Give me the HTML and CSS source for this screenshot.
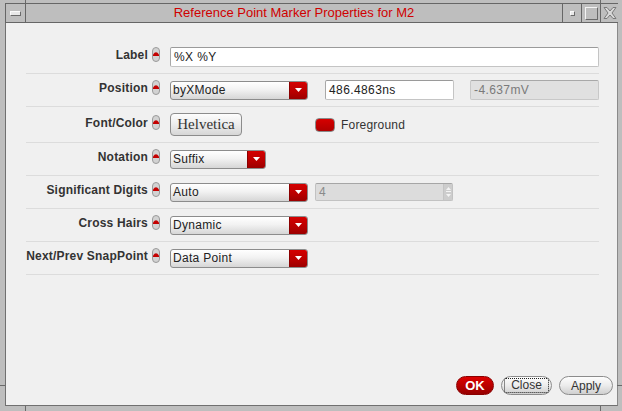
FILE: index.html
```html
<!DOCTYPE html>
<html>
<head>
<meta charset="utf-8">
<link rel="stylesheet" href="styles.css">
</head>
<body>
<div class="window">
  <span class="tick tick-tl"></span>
  <span class="tick tick-tr"></span>
  <span class="tick tick-bl"></span>
  <span class="tick tick-br"></span>
  <span class="tick tick-lb"></span>
  <span class="tick tick-rb"></span>
  <div class="titlebar">
    <div class="tb-btn tb-menu"><span class="menu-glyph"></span></div>
    <div class="tb-title">Reference Point Marker Properties for M2</div>
    <div class="tb-btn tb-min"><span class="min-glyph"></span></div>
    <div class="tb-btn tb-max"><span class="max-glyph"></span></div>
    <div class="tb-btn tb-close">
      <svg width="14" height="14" viewBox="0 0 14 14"><path d="M1 1.5 L4 1.5 L7 5 L10 1.5 L13 1.5 L9 7 L13 12.5 L10 12.5 L7 9 L4 12.5 L1 12.5 L5 7 Z" fill="#d8d8d8" stroke="#7a7a7a" stroke-width="1"/></svg>
    </div>
  </div>
  <div class="body">
    <div class="content">
      <div class="form">
        <div class="row">
          <div class="label">Label</div>
          <span class="bind"><svg width="8" height="15" viewBox="0 0 8 15"><rect x="0.5" y="0.5" width="7" height="14" rx="3.5" fill="#d2d2d2" stroke="#9a9a9a"/><path d="M1 9 L1 7.5 Q4 3 7 7.5 L7 9 Z" fill="#c40000"/></svg></span>
          <div class="controls">
            <div class="field field-wide">%X %Y</div>
          </div>
        </div>
        <div class="row">
          <div class="label">Position</div>
          <span class="bind"><svg width="8" height="15" viewBox="0 0 8 15"><rect x="0.5" y="0.5" width="7" height="14" rx="3.5" fill="#d2d2d2" stroke="#9a9a9a"/><path d="M1 9 L1 7.5 Q4 3 7 7.5 L7 9 Z" fill="#c40000"/></svg></span>
          <div class="controls">
            <div class="dropdown"><span class="value">byXMode</span><span class="arrow"><svg width="7" height="4" viewBox="0 0 7 4"><path d="M0 0 H7 L3.5 4 Z" fill="#fff"/></svg></span></div>
            <div class="field field-x">486.4863ns</div>
            <div class="field field-y disabled">-4.637mV</div>
          </div>
        </div>
        <div class="row row-tall">
          <div class="label">Font/Color</div>
          <span class="bind"><svg width="8" height="15" viewBox="0 0 8 15"><rect x="0.5" y="0.5" width="7" height="14" rx="3.5" fill="#d2d2d2" stroke="#9a9a9a"/><path d="M1 9 L1 7.5 Q4 3 7 7.5 L7 9 Z" fill="#c40000"/></svg></span>
          <div class="controls">
            <div class="font-btn">Helvetica</div>
            <span class="swatch"></span>
            <span class="swatch-label">Foreground</span>
          </div>
        </div>
        <div class="row">
          <div class="label">Notation</div>
          <span class="bind"><svg width="8" height="15" viewBox="0 0 8 15"><rect x="0.5" y="0.5" width="7" height="14" rx="3.5" fill="#d2d2d2" stroke="#9a9a9a"/><path d="M1 9 L1 7.5 Q4 3 7 7.5 L7 9 Z" fill="#c40000"/></svg></span>
          <div class="controls">
            <div class="dropdown dropdown-short"><span class="value">Suffix</span><span class="arrow"><svg width="7" height="4" viewBox="0 0 7 4"><path d="M0 0 H7 L3.5 4 Z" fill="#fff"/></svg></span></div>
          </div>
        </div>
        <div class="row">
          <div class="label">Significant Digits</div>
          <span class="bind"><svg width="8" height="15" viewBox="0 0 8 15"><rect x="0.5" y="0.5" width="7" height="14" rx="3.5" fill="#d2d2d2" stroke="#9a9a9a"/><path d="M1 9 L1 7.5 Q4 3 7 7.5 L7 9 Z" fill="#c40000"/></svg></span>
          <div class="controls">
            <div class="dropdown"><span class="value">Auto</span><span class="arrow"><svg width="7" height="4" viewBox="0 0 7 4"><path d="M0 0 H7 L3.5 4 Z" fill="#fff"/></svg></span></div>
            <div class="spin">
              <span class="spin-val">4</span>
              <span class="spin-arrows"><svg width="7" height="14" viewBox="0 0 7 14"><path d="M1 5 L3.5 2 L6 5 Z" fill="#f4f4f4"/><path d="M1 9 L3.5 12 L6 9 Z" fill="#f4f4f4"/><path d="M1 6.5 H6" stroke="#f4f4f4"/></svg></span>
            </div>
          </div>
        </div>
        <div class="row">
          <div class="label">Cross Hairs</div>
          <span class="bind"><svg width="8" height="15" viewBox="0 0 8 15"><rect x="0.5" y="0.5" width="7" height="14" rx="3.5" fill="#d2d2d2" stroke="#9a9a9a"/><path d="M1 9 L1 7.5 Q4 3 7 7.5 L7 9 Z" fill="#c40000"/></svg></span>
          <div class="controls">
            <div class="dropdown"><span class="value">Dynamic</span><span class="arrow"><svg width="7" height="4" viewBox="0 0 7 4"><path d="M0 0 H7 L3.5 4 Z" fill="#fff"/></svg></span></div>
          </div>
        </div>
        <div class="row">
          <div class="label">Next/Prev SnapPoint</div>
          <span class="bind"><svg width="8" height="15" viewBox="0 0 8 15"><rect x="0.5" y="0.5" width="7" height="14" rx="3.5" fill="#d2d2d2" stroke="#9a9a9a"/><path d="M1 9 L1 7.5 Q4 3 7 7.5 L7 9 Z" fill="#c40000"/></svg></span>
          <div class="controls">
            <div class="dropdown"><span class="value">Data Point</span><span class="arrow"><svg width="7" height="4" viewBox="0 0 7 4"><path d="M0 0 H7 L3.5 4 Z" fill="#fff"/></svg></span></div>
          </div>
        </div>
      </div>
      <div class="actions">
        <button class="pill pill-ok">OK</button>
        <button class="pill pill-close"><span class="focus">Close</span></button>
        <button class="pill pill-apply">Apply</button>
      </div>
    </div>
  </div>
</div>
</body>
</html>
```
FILE: styles.css
```css
* { box-sizing: border-box; }
html, body { margin: 0; padding: 0; }
body {
  width: 622px;
  height: 411px;
  overflow: hidden;
  font-family: "Liberation Sans", Arial, sans-serif;
  font-size: 12px;
  color: #222;
}
.window {
  position: relative;
  width: 622px;
  height: 411px;
  background: #bebebe;
  display: flex;
  flex-direction: column;
}
.tick { position: absolute; background: #6a6a6a; }
.tick-tl { left: 25px; top: 0; width: 1px; height: 3px; }
.tick-tr { left: 600px; top: 0; width: 1px; height: 3px; }
.tick-bl { left: 25px; top: 406px; width: 1px; height: 5px; }
.tick-br { left: 600px; top: 406px; width: 1px; height: 5px; }
.tick-lb { left: 0; top: 385px; width: 5px; height: 1px; }
.tick-rb { left: 617px; top: 385px; width: 5px; height: 1px; }

.titlebar {
  display: flex;
  height: 20px;
  margin: 3px 4px 0 5px;
  border-top: 1px solid #666;
  border-bottom: 1px solid #666;
  border-left: 1px solid #666;
}
.tb-btn {
  display: flex;
  align-items: center;
  justify-content: center;
  border-right: 1px solid #666;
}
.tb-menu { width: 20px; }
.menu-glyph {
  width: 11px;
  height: 5px;
  border: 1px solid #6a6a6a;
  border-top-color: #fafafa;
  border-left-color: #fafafa;
  background: #e8e8e8;
}
.tb-title {
  flex: 1;
  text-align: center;
  color: #d00000;
  font-size: 13px;
  line-height: 18px;
  border-right: 1px solid #666;
}
.tb-min { width: 19px; }
.min-glyph {
  width: 5px;
  height: 5px;
  border: 1px solid #6a6a6a;
  border-top-color: #fafafa;
  border-left-color: #fafafa;
  background: #e8e8e8;
}
.tb-max { width: 19px; }
.max-glyph {
  width: 13px;
  height: 13px;
  border: 1px solid #6a6a6a;
  border-top-color: #f4f4f4;
  border-left-color: #f4f4f4;
}
.tb-close { width: 17px; border-right: none; }

.body {
  flex: 1;
  display: flex;
  padding: 0 4px 5px 5px;
}
.content {
  flex: 1;
  display: flex;
  flex-direction: column;
  background: #f0f0f0;
  border-left: 1px solid #707070;
  border-right: 1px solid #8a8a8a;
  border-bottom: 1px solid #707070;
}
.form {
  margin: 18px 0 0 20px;
  width: 573px;
}
.row {
  display: flex;
  align-items: center;
  height: 33px;
  border-bottom: 1px solid #dcdcdc;
}
.row-tall { height: 36px; }
.label {
  width: 122px;
  text-align: right;
  font-weight: bold;
  color: #333;
  margin-bottom: 4px;
  white-space: nowrap;
  letter-spacing: 0.2px;
}
.bind {
  display: flex;
  margin: 0 0 5px 4px;
  width: 8px;
}
.controls {
  flex: 1;
  display: flex;
  align-items: center;
  margin-left: 10px;
}
.field {
  height: 20px;
  background: #fff;
  border: 1px solid #c4c4c4;
  border-top-color: #9a9a9a;
  border-left-color: #a8a8a8;
  border-radius: 2px;
  padding-left: 3px;
  line-height: 18px;
  color: #222;
  letter-spacing: 0.4px;
}
.field-wide { width: 429px; }
.field-x { width: 129px; margin-left: 17px; }
.field-y { width: 129px; margin-left: 16px; }
.disabled { background: #e0e0e0; color: #7a7a7a; border-color: #c8c8c8; border-top-color: #a8a8a8; }

.dropdown {
  width: 138px;
  height: 19px;
  display: flex;
  border: 1px solid #8c8c8c;
  border-radius: 3px;
  background: linear-gradient(#ffffff, #f2f2f2 45%, #d6d6d6);
  overflow: hidden;
}
.dropdown-short { width: 96px; }
.value {
  flex: 1;
  padding-left: 2px;
  line-height: 17px;
  color: #222;
  letter-spacing: 0.3px;
}
.arrow {
  width: 18px;
  display: flex;
  align-items: center;
  justify-content: center;
  background: linear-gradient(#d40000, #b80000 60%, #9c0000);
  border-left: 1px solid #8a0000;
}

.spin {
  width: 138px;
  height: 18px;
  margin-left: 7px;
  display: flex;
  background: #dcdcdc;
  border: 1px solid #c2c2c2;
  border-top-color: #a6a6a6;
  border-radius: 2px;
}
.spin-val { flex: 1; padding-left: 3px; line-height: 16px; color: #8a8a8a; }
.spin-arrows {
  width: 9px;
  display: flex;
  align-items: center;
  justify-content: center;
  background: #cdcdcd;
  border-left: 1px solid #c4c4c4;
}

.font-btn {
  width: 72px;
  height: 23px;
  border: 1px solid #8c8c8c;
  border-radius: 4px;
  background: linear-gradient(#fdfdfd, #ececec 50%, #d6d6d6);
  font-family: "Liberation Serif", "Times New Roman", serif;
  font-size: 15px;
  color: #333;
  text-align: center;
  line-height: 21px;
}
.swatch {
  width: 20px;
  height: 14px;
  margin-left: 73px;
  background: linear-gradient(#d60000, #b00000);
  border: 1px solid #8a8a8a;
  border-radius: 4px;
}
.swatch-label { margin-left: 6px; color: #333; letter-spacing: 0.2px; }

.actions {
  margin-top: auto;
  margin-bottom: 10px;
  display: flex;
  justify-content: flex-end;
  padding-right: 4px;
}
.pill {
  height: 19px;
  border-radius: 10px;
  padding: 0;
  font-family: "Liberation Sans", Arial, sans-serif;
  font-size: 12px;
  display: flex;
  align-items: center;
  justify-content: center;
}
.pill-ok {
  width: 38px;
  background: linear-gradient(#dc0000, #b40000 60%, #960000);
  border: 1px solid #8a0000;
  color: #fff;
  font-weight: bold;
  font-size: 13px;
}
.pill-close {
  width: 51px;
  margin-left: 7px;
  background: linear-gradient(#fdfdfd, #ececec 50%, #cfcfcf);
  border: 1px solid #8c8c8c;
  color: #333;
}
.focus {
  border: 1px dotted #222;
  line-height: 13px;
  width: 45px;
  text-align: center;
  border-radius: 2px;
}
.pill-apply {
  width: 54px;
  margin-left: 7px;
  background: linear-gradient(#fdfdfd, #ececec 50%, #cfcfcf);
  border: 1px solid #8c8c8c;
  color: #333;
}
```
